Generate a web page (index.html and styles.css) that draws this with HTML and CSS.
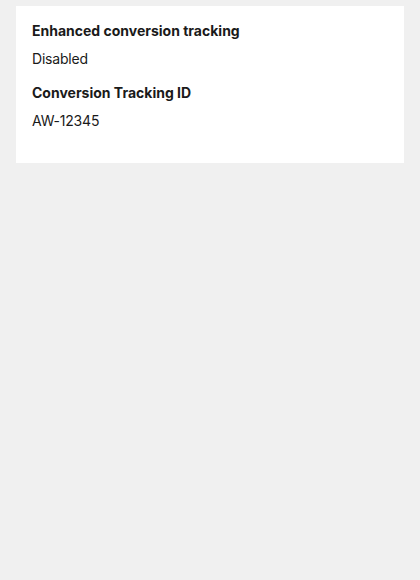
FILE: index.html
```html
<!DOCTYPE html>
<html>
<head>
<meta charset="utf-8">
<link rel="stylesheet" href="styles.css">
</head>
<body>
<div class="card">
  <div class="field">
    <div class="label">Enhanced conversion tracking</div>
    <div class="value">Disabled</div>
  </div>
  <div class="field">
    <div class="label">Conversion Tracking ID</div>
    <div class="value">AW-12345</div>
  </div>
</div>
</body>
</html>
```

FILE: styles.css
```css
html, body {
  margin: 0;
  padding: 0;
  background: #f0f0f0;
}
body {
  padding: 6px 16px;
  font-family: "Inter", "Noto Sans", sans-serif;
  color: #1a1a1a;
}
.card {
  background: #ffffff;
  padding: 15px 16px 32px;
  display: flex;
  flex-direction: column;
  gap: 14px;
}
.field {
  display: flex;
  flex-direction: column;
  gap: 8px;
}
.label {
  font-size: 14px;
  font-weight: 700;
  line-height: 20px;
}
.value {
  font-size: 14px;
  font-weight: 400;
  line-height: 20px;
  letter-spacing: -0.2px;
}
```
